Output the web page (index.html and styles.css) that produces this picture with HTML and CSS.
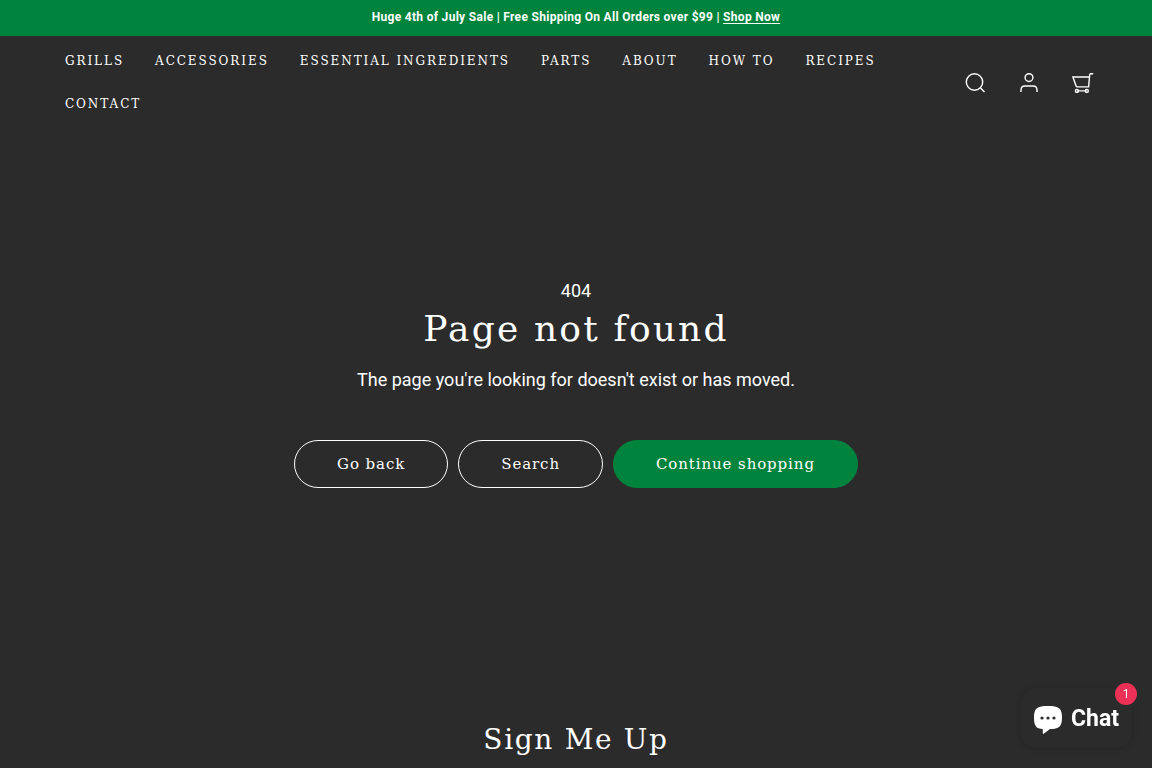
FILE: index.html
```html
<!DOCTYPE html>
<html lang="en">
<head>
<meta charset="utf-8">
<meta name="viewport" content="width=device-width, initial-scale=1">
<title>Page not found</title>
<link rel="stylesheet" href="styles.css">
</head>
<body>
<div class="announcement">Huge 4th of July Sale | Free Shipping On All Orders over $99 | <a href="#">Shop Now</a></div>
<header class="header">
  <nav class="nav" aria-label="Main">
    <a href="#">GRILLS</a>
    <a href="#">ACCESSORIES</a>
    <a href="#">ESSENTIAL INGREDIENTS</a>
    <a href="#">PARTS</a>
    <a href="#">ABOUT</a>
    <a href="#">HOW TO</a>
    <a href="#">RECIPES</a>
    <a href="#">CONTACT</a>
  </nav>
  <div class="tools">
    <button type="button" aria-label="Search"><svg viewBox="0 0 24 24"><circle cx="11.500" cy="11" r="8.200"/><path d="M17.500 17l4 4"/></svg></button>
    <a href="#" aria-label="Account"><svg viewBox="0 0 24 24"><circle cx="12" cy="6.6" r="3.9"/><path d="M4 21v-2q0-4 4-4h8q4 0 4 4v2"/></svg></a>
    <a href="#" aria-label="Cart"><svg viewBox="0 0 24 24"><path d="M22.2 2.8h-2.4q-1 0-1.1 1l-1.1 12.1H6.2q-.8 0-1.1-1L1.900 6h16.500M5.900 19.900h9.900"/><circle cx="5.900" cy="19.900" r="1.500"/><circle cx="15.800" cy="19.900" r="1.500"/></svg></a>
  </div>
</header>
<main class="missing">
  <p class="code">404</p>
  <h1>Page not found</h1>
  <p class="message">The page you're looking for doesn't exist or has moved.</p>
  <div class="actions">
    <button type="button" class="button">Go back</button>
    <a href="#" class="button">Search</a>
    <a href="#" class="button button-primary">Continue shopping</a>
  </div>
</main>
<section class="signup"><h2>Sign Me Up</h2></section>
<button type="button" class="chat">
  <svg viewBox="0 0 28 28"><path fill="#fff" d="M14 0c11 0 14 2 14 11.500S25 23 16 23l-6 4.600q-1.200.8-1.200-.6V23C2 22.500 0 20 0 11.500 0 2 3 0 14 0z"/><g fill="#2b2b2b"><circle cx="8" cy="12" r="1.600"/><circle cx="14" cy="12" r="1.600"/><circle cx="20" cy="12" r="1.600"/></g></svg>
  <span>Chat</span>
  <span class="badge">1</span>
</button>
</body>
</html>
```
FILE: styles.css
```css
* { box-sizing: border-box; }
html { overflow: hidden; }
body {
  margin: 0;
  background: #2b2b2b;
  color: #fff;
  font-family: Roboto, sans-serif;
  font-size: 18px;
}
a { color: inherit; }
p, h1, h2 { margin: 0; }
button { font: inherit; color: inherit; background: none; border: 0; padding: 0; cursor: pointer; }
.announcement {
  background: #00843d;
  padding: 8px 16px 10px;
  text-align: center;
  font-size: 12px;
  font-weight: 700;
  line-height: 18px;
  letter-spacing: 0.025em;
}
.announcement a { text-underline-offset: 2px; }
.header {
  display: flex;
  align-items: center;
  justify-content: space-between;
  padding: 4px 47px 5px 50px;
}
.nav {
  flex: 0 1 860px;
  display: flex;
  flex-wrap: wrap;
  column-gap: 1px;
}
.nav a {
  padding: 12px 15px;
  font-family: "Roboto Slab", "DejaVu Serif", serif;
  font-size: 12px;
  line-height: 19px;
  letter-spacing: 0.16em;
  text-decoration: none;
}
.tools { display: flex; gap: 10px; }
.tools a, .tools button { display: grid; place-items: center; width: 44px; height: 44px; }
.tools svg {
  width: 24px;
  height: 24px;
  fill: none;
  stroke: #fff;
  stroke-width: 1.4;
}
.missing { padding: 144px 24px 192px; text-align: center; }
.code { line-height: 32px; }
h1, h2 {
  font-family: "Roboto Slab", "DejaVu Serif", serif;
  font-weight: 400;
  letter-spacing: 0.06em;
}
h1 { font-size: 36px; line-height: 48px; margin-top: -2px; }
.message { margin-top: 11px; line-height: 32px; }
.actions { display: flex; flex-wrap: wrap; justify-content: center; gap: 10px; margin-top: 44px; }
.button {
  display: inline-flex;
  align-items: center;
  height: 48px;
  padding: 0 42px;
  border: 1px solid #fff;
  border-radius: 24px;
  font-family: "Roboto Slab", "DejaVu Serif", serif;
  font-size: 15px;
  letter-spacing: 0.06em;
  text-decoration: none;
}
.button-primary { background: #00843d; border-color: #00843d; }
.signup { padding: 38px 24px; text-align: center; }
h2 { font-size: 28px; line-height: 44px; }
.chat {
  position: fixed;
  right: 20px;
  bottom: 20px;
  display: flex;
  align-items: center;
  gap: 9px;
  height: 60px;
  padding: 0 13px;
  border-radius: 16px;
  background: #2b2b2b;
  box-shadow: 0 0 6px rgba(0, 0, 0, 0.15);
  font-size: 23px;
  font-weight: 700;
}
.chat svg { width: 28px; height: 28px; margin-top: 4px; }
.badge {
  position: absolute;
  top: -5px;
  right: -5px;
  width: 22px;
  height: 22px;
  border-radius: 50%;
  background: #ed3156;
  font-size: 12px;
  font-weight: 400;
  line-height: 22px;
}
```
